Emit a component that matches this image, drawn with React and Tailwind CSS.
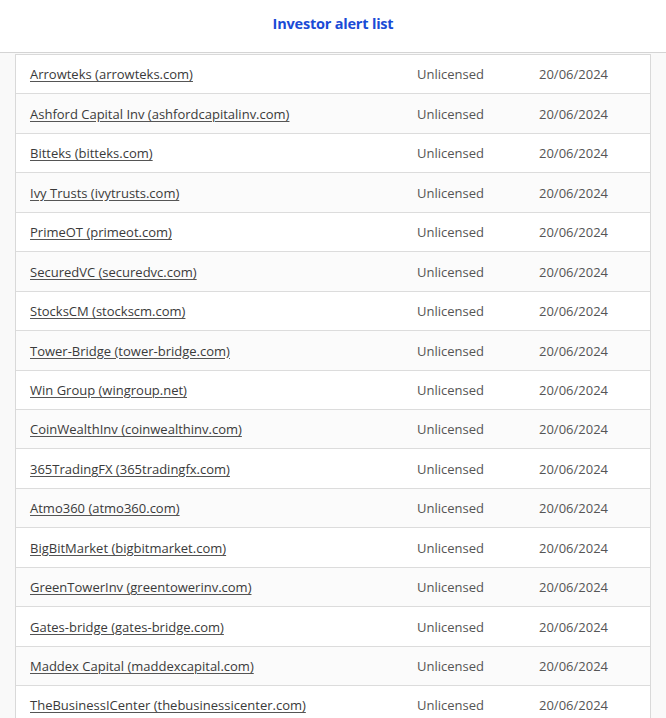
import React from "react";

const rows = [
  "Arrowteks (arrowteks.com)",
  "Ashford Capital Inv (ashfordcapitalinv.com)",
  "Bitteks (bitteks.com)",
  "Ivy Trusts (ivytrusts.com)",
  "PrimeOT (primeot.com)",
  "SecuredVC (securedvc.com)",
  "StocksCM (stockscm.com)",
  "Tower-Bridge (tower-bridge.com)",
  "Win Group (wingroup.net)",
  "CoinWealthInv (coinwealthinv.com)",
  "365TradingFX (365tradingfx.com)",
  "Atmo360 (atmo360.com)",
  "BigBitMarket (bigbitmarket.com)",
  "GreenTowerInv (greentowerinv.com)",
  "Gates-bridge (gates-bridge.com)",
  "Maddex Capital (maddexcapital.com)",
  "TheBusinessICenter (thebusinessicenter.com)",
];

export default function App() {
  return (
    <div
      className="w-[666px] h-[718px] overflow-hidden bg-[#f9f9f9]"
      style={{ fontFamily: '"Open Sans", "Liberation Sans", sans-serif' }}
    >
      <div className="h-[53px] bg-white border-b border-[#d4d4d4] flex items-center justify-center">
        <span className="text-[14.5px] font-bold text-[#1a4bd6] tracking-[-0.2px] mt-[-4px]">
          Investor alert list
        </span>
      </div>
      <div className="mx-[15px] mt-[1px] border border-[#d9d9d9] bg-white">
        {rows.map((r, i) => (
          <div
            key={i}
            className={`h-[39.44px] pt-[2px] flex items-center text-[13px] text-[#3a3a3a] border-b border-[#dcdcdc] ${
              i % 2 === 1 ? "bg-[#fbfbfb]" : "bg-white"
            }`}
          >
            <span className="pl-[14px] w-[401px] shrink-0 underline underline-offset-2 decoration-[#555]">
              {r}
            </span>
            <span className="w-[122px] shrink-0 text-[#555]">Unlicensed</span>
            <span className="text-[#555]">20/06/2024</span>
          </div>
        ))}
      </div>
    </div>
  );
}
